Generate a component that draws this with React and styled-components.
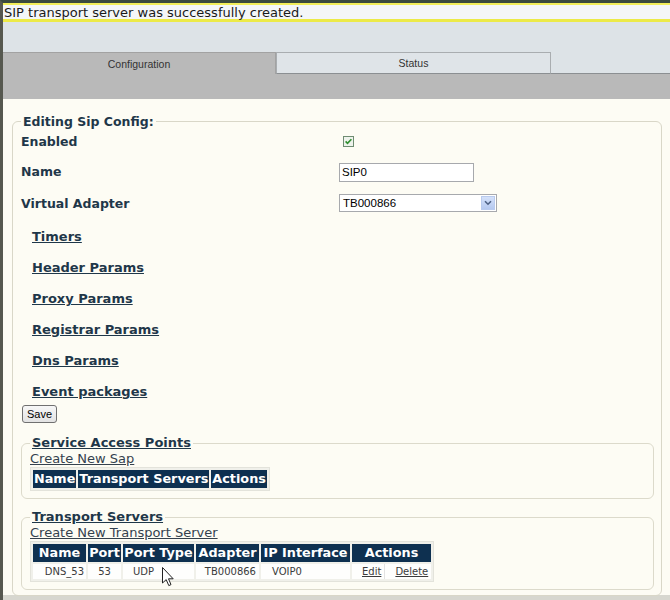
import React from "react";
import styled, { createGlobalStyle } from "styled-components";

const Global = createGlobalStyle`
  html, body { margin: 0; padding: 0; }
  body { background: #d7d7cf; font-family: "DejaVu Sans", Verdana, sans-serif; }
  * { box-sizing: border-box; }
`;

const Page = styled.div`
  position: relative;
  width: 670px;
  height: 600px;
  overflow: hidden;
  border-top: 3px solid #3b4a3f;
  border-left: 3px solid #56584f;
  background: #d7d7cf;
  display: flex;
  flex-direction: column;
`;

const Banner = styled.div`
  height: 19px;
  border-top: 2px solid #f2ee5a;
  border-bottom: 3px solid #ecea48;
  background: #f4f6f8;
  padding: 1px 1px 0;
  font-size: 13px;
  line-height: 14px;
  color: #1a1a1a;
  white-space: nowrap;
`;

const HeaderSpace = styled.div`
  height: 30px;
  background: #dde3e7;
`;

const TabBar = styled.div`
  display: flex;
  height: 22px;
  background: #dde3e7;
`;

const Tab = styled.div`
  width: ${(p) => p.$w}px;
  height: 22px;
  display: flex;
  align-items: center;
  justify-content: center;
  font-family: "Liberation Sans", Arial, sans-serif;
  font-size: 10.5px;
  color: #333;
  background: ${(p) => (p.$active ? "#b9b9b9" : "#dfe4e8")};
  border: 1px solid ${(p) => (p.$active ? "#a2a2a2" : "#a9adb0")};
  border-left: ${(p) => (p.$active ? "none" : "1px solid #a9adb0")};
  border-bottom: ${(p) => (p.$active ? "none" : "1px solid #8b8f92")};
`;

const TabFiller = styled.div`
  flex: 1;
  border-bottom: 1px solid #8b8f92;
`;

const Band = styled.div`
  height: 25px;
  background: #b9b9b9;
`;

const Content = styled.div`
  height: 496px;
  background: #fdfcf4;
  padding: 15px 8px 0 9px;
`;

const OuterFieldset = styled.fieldset`
  margin: 0;
  padding: 0 7px 5px 8px;
  border: 1px solid #d9d7c8;
  border-radius: 6px;
  min-width: 0;
`;

const Legend = styled.legend`
  padding: 0 2px;
  font-weight: bold;
  font-size: 12.5px;
  line-height: 15px;
  color: #1f3749;
`;

const FormRow = styled.div`
  display: grid;
  grid-template-columns: 318px 1fr;
  align-items: center;
  height: ${(p) => p.$h}px;
`;

const Label = styled.div`
  font-weight: bold;
  font-size: 12.5px;
  color: #1f3749;
`;

const CheckWrap = styled.div`
  margin-left: 4px;
  width: 11px;
  height: 11px;
  display: flex;
`;

const TextInput = styled.input`
  width: 135px;
  height: 19px;
  border: 1px solid #a7a9ad;
  padding: 0 2px;
  font-family: "Liberation Sans", Arial, sans-serif;
  font-size: 11.5px;
  color: #000;
  background: #fff;
  outline: none;
`;

const SelectBox = styled.div`
  width: 158px;
  height: 18px;
  border: 1px solid #a7a9ad;
  background: #fff;
  display: flex;
  align-items: center;
  justify-content: space-between;
  padding: 1px;
  font-family: "Liberation Sans", Arial, sans-serif;
  font-size: 11.5px;
  color: #000;
`;

const SelectText = styled.span`
  padding-left: 2px;
`;

const ArrowBtn = styled.div`
  width: 14px;
  height: 14px;
  background: linear-gradient(#d4e1fa, #b5c9f0);
  border: 1px solid #b9cbee;
  display: flex;
  align-items: center;
  justify-content: center;
`;

const LinkList = styled.div`
  display: flex;
  flex-direction: column;
  gap: 15px;
  margin-top: 12px;
  padding-left: 11px;
`;

const NavLink = styled.a`
  align-self: flex-start;
  font-weight: bold;
  font-size: 13px;
  line-height: 16px;
  color: #1f3749;
  text-decoration: underline;
`;

const SaveButton = styled.button`
  display: block;
  margin: 5px 0 0 1px;
  width: 35px;
  height: 18px;
  padding: 0;
  font-family: "Liberation Sans", Arial, sans-serif;
  font-size: 11px;
  color: #000;
  border: 1px solid #707070;
  border-radius: 3px;
  background: linear-gradient(#f7f7f7, #e3e3e3);
`;

const SubFieldset = styled.fieldset`
  margin: ${(p) => p.$top}px 0 0;
  padding: 0 8px 7px 8px;
  border: 1px solid #dcdacb;
  border-radius: 6px;
  min-width: 0;
`;

const SubLegend = styled.legend`
  padding: 0 2px;
  font-weight: bold;
  font-size: 13px;
  line-height: 16px;
  color: #1f3749;
  text-decoration: underline;
`;

const CreateLink = styled.a`
  display: block;
  width: fit-content;
  font-size: 13px;
  line-height: 16px;
  color: #34414e;
  text-decoration: underline;
`;

const Table = styled.table`
  border-collapse: separate;
  border-spacing: 2px;
  border: 1px solid #e3e3db;
  background: #f0f0ea;
`;

const Th = styled.th`
  background: #0e3050;
  color: #fff;
  font-weight: bold;
  font-size: 12.8px;
  height: 18px;
  line-height: 18px;
  padding: 0 1px;
  white-space: nowrap;
  text-align: center;
  width: ${(p) => (p.$w ? `${p.$w}px` : "auto")};
`;

const Td = styled.td`
  background: #fefefd;
  font-size: 10px;
  color: #3b3b3b;
  height: 15px;
  line-height: 15px;
  white-space: nowrap;
  text-align: ${(p) => p.$align || "left"};
  padding: 0 ${(p) => p.$pr || 0}px 0 ${(p) => p.$pl || 0}px;
`;

const ActionLink = styled.a`
  display: inline-block;
  color: #3b3b3b;
  text-decoration: underline;
  font-size: 10px;
  ${(p) =>
    p.$sep &&
    `padding-right: 3px; border-right: 1px solid #e2e2e2; margin-right: 10px;`}
`;

const Cursor = styled.svg`
  position: absolute;
  left: 159px;
  top: 564px;
`;

function CheckIcon() {
  return (
    <svg width="11" height="11" viewBox="0 0 11 11">
      <rect x="0.5" y="0.5" width="10" height="10" fill="#eef3ec" stroke="#6f8c72" />
      <path d="M2.6 5.4 L4.5 7.4 L8.4 3.2" fill="none" stroke="#2f8f2f" strokeWidth="1.6" />
    </svg>
  );
}

function Chevron() {
  return (
    <svg width="8" height="6" viewBox="0 0 8 6">
      <path d="M1 1.2 L4 4.2 L7 1.2" fill="none" stroke="#4d6185" strokeWidth="1.6" />
    </svg>
  );
}

const links = [
  "Timers",
  "Header Params",
  "Proxy Params",
  "Registrar Params",
  "Dns Params",
  "Event packages",
];

export default function App() {
  return (
    <>
      <Global />
      <Page>
        <Banner>SIP transport server was successfully created.</Banner>
        <HeaderSpace />
        <TabBar>
          <Tab $w={273} $active>Configuration</Tab>
          <Tab $w={275}>Status</Tab>
          <TabFiller />
        </TabBar>
        <Band />
        <Content>
          <OuterFieldset>
            <Legend>Editing Sip Config:</Legend>
            <FormRow $h={25}>
              <Label>Enabled</Label>
              <CheckWrap>
                <CheckIcon />
              </CheckWrap>
            </FormRow>
            <FormRow $h={35}>
              <Label>Name</Label>
              <div>
                <TextInput value="SIP0" readOnly />
              </div>
            </FormRow>
            <FormRow $h={28}>
              <Label>Virtual Adapter</Label>
              <SelectBox>
                <SelectText>TB000866</SelectText>
                <ArrowBtn>
                  <Chevron />
                </ArrowBtn>
              </SelectBox>
            </FormRow>
            <LinkList>
              {links.map((l) => (
                <NavLink key={l}>{l}</NavLink>
              ))}
            </LinkList>
            <SaveButton>Save</SaveButton>

            <SubFieldset $top={12}>
              <SubLegend>Service Access Points</SubLegend>
              <CreateLink>Create New Sap</CreateLink>
              <Table>
                <thead>
                  <tr>
                    <Th>Name</Th>
                    <Th>Transport Servers</Th>
                    <Th>Actions</Th>
                  </tr>
                </thead>
              </Table>
            </SubFieldset>

            <SubFieldset $top={10}>
              <SubLegend>Transport Servers</SubLegend>
              <CreateLink>Create New Transport Server</CreateLink>
              <Table>
                <thead>
                  <tr>
                    <Th $w={53}>Name</Th>
                    <Th $w={33}>Port</Th>
                    <Th $w={71}>Port Type</Th>
                    <Th $w={63}>Adapter</Th>
                    <Th $w={89}>IP Interface</Th>
                    <Th $w={79}>Actions</Th>
                  </tr>
                </thead>
                <tbody>
                  <tr>
                    <Td $align="right" $pr={2}>DNS_53</Td>
                    <Td $align="center">53</Td>
                    <Td $pl={10}>UDP</Td>
                    <Td $align="right" $pr={3}>TB000866</Td>
                    <Td $pl={11}>VOIP0</Td>
                    <Td $pl={10}>
                      <ActionLink $sep>Edit</ActionLink>
                      <ActionLink>Delete</ActionLink>
                    </Td>
                  </tr>
                </tbody>
              </Table>
            </SubFieldset>
          </OuterFieldset>
        </Content>
        <Cursor width="12" height="20" viewBox="0 0 12 20">
          <path
            d="M0.5 0.5 L0.5 16 L4.2 12.6 L6.8 18.6 L9 17.6 L6.5 11.8 L11.2 11.8 Z"
            fill="#fff"
            stroke="#222"
            strokeWidth="1"
          />
        </Cursor>
      </Page>
    </>
  );
}
